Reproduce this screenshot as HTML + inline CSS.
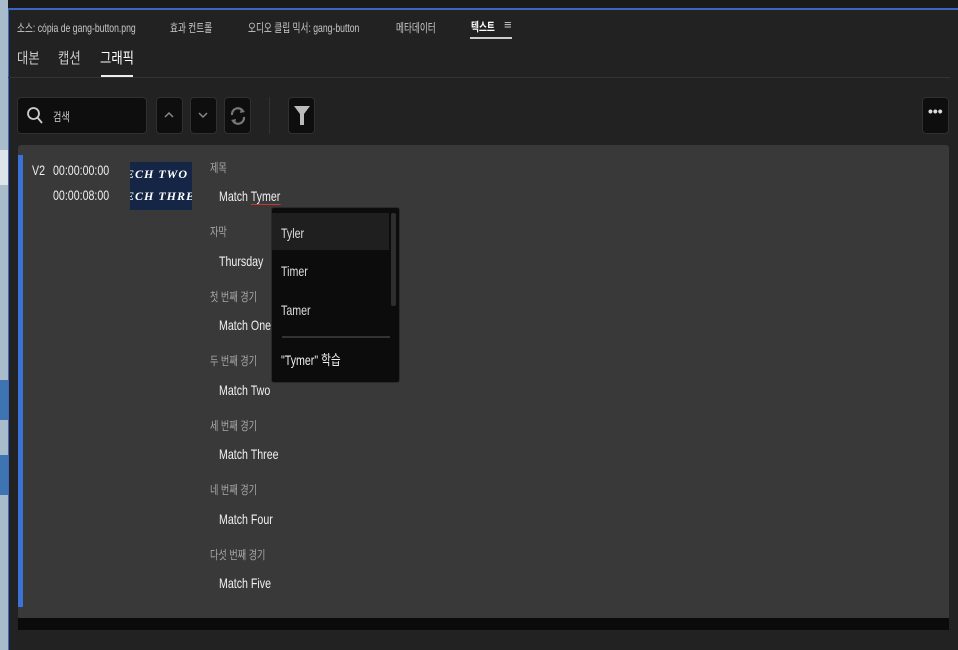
<!DOCTYPE html>
<html><head><meta charset="utf-8"><style>
*{margin:0;padding:0;box-sizing:border-box}
body{width:958px;height:650px;overflow:hidden;background:#1d1d1d;position:relative;font-family:"Liberation Sans","Noto Sans CJK KR",sans-serif;color:#ddd}
.a{position:absolute}
.t{position:absolute;white-space:nowrap;transform:scaleX(.76);transform-origin:left top}
.btn{position:absolute;background:#0e0e0e;border:1px solid #303030;border-radius:4px}
.lbl{font-size:12px;color:#a8a8a8}
.val{font-size:14px;color:#f0f0f0}
.tab{font-size:12px;color:#c8c8c8;transform:scaleX(.72)}
</style></head><body>
<div class="a" style="left:0;top:0;width:958px;height:8px;background:#1b1b1b"></div>
<div class="a" style="left:0;top:8px;width:958px;height:2px;background:#3a66c4"></div>
<div class="a" style="left:0;top:0;width:8px;height:650px;background:#a9bccb"></div>
<div class="a" style="left:0;top:150px;width:8px;height:35px;background:#dde4ea"></div>
<div class="a" style="left:0;top:380px;width:8px;height:40px;background:#3f74b3"></div>
<div class="a" style="left:0;top:455px;width:8px;height:40px;background:#3f74b3"></div>
<div class="a" style="left:8px;top:10px;width:950px;height:640px;background:#222"></div>
<div class="a" style="left:8px;top:10px;width:1px;height:640px;background:#3a66c4"></div>
<div class="t tab" style="left:17px;top:19px">소스: cópia de gang-button.png</div>
<div class="t tab" style="left:170px;top:19px">효과 컨트롤</div>
<div class="t tab" style="left:248px;top:19px">오디오 클립 믹서: gang-button</div>
<div class="t tab" style="left:396px;top:19px">메타데이터</div>
<div class="t tab" style="left:471px;top:18px;color:#fff;font-weight:bold">텍스트</div>
<div class="a" style="left:504px;top:17px;font-size:13px;color:#ccc">≡</div>
<div class="a" style="left:470px;top:37px;width:42px;height:2px;background:#ccc"></div>
<div class="t" style="left:17px;top:47px;font-size:15px;color:#ccc;transform:scaleX(.82)">대본</div>
<div class="t" style="left:58px;top:47px;font-size:15px;color:#ccc;transform:scaleX(.82)">캡션</div>
<div class="t" style="left:100px;top:47px;font-size:15px;color:#fff;transform:scaleX(.82)">그래픽</div>
<div class="a" style="left:101px;top:75px;width:32px;height:2px;background:#eee"></div>
<div class="a" style="left:8px;top:77px;width:942px;height:1px;background:#333"></div>
<div class="btn" style="left:17px;top:97px;width:130px;height:37px"></div>
<svg class="a" style="left:26px;top:106px" width="18" height="20"><circle cx="7.5" cy="7.5" r="5.5" fill="none" stroke="#ccc" stroke-width="1.8"/><line x1="11.5" y1="11.5" x2="16" y2="17" stroke="#ccc" stroke-width="1.8"/></svg>
<div class="t" style="left:53px;top:108px;font-size:12px;color:#ccc">검색</div>
<div class="btn" style="left:156px;top:97px;width:27px;height:37px"></div>
<svg class="a" style="left:163px;top:111px" width="12" height="8"><path d="M2 6L6 2L10 6" fill="none" stroke="#888" stroke-width="1.5"/></svg>
<div class="btn" style="left:190px;top:97px;width:27px;height:37px"></div>
<svg class="a" style="left:197px;top:111px" width="12" height="8"><path d="M2 2L6 6L10 2" fill="none" stroke="#888" stroke-width="1.5"/></svg>
<div class="btn" style="left:224px;top:97px;width:27px;height:37px"></div>
<svg class="a" style="left:228px;top:104px" width="20" height="24"><path d="M4 11A6 6 0 0 1 15 7M16 13A6 6 0 0 1 5 17" fill="none" stroke="#777" stroke-width="2.2"/><path d="M13 4L17 8L12 9Z M7 20L3 16L8 15Z" fill="#777"/></svg>
<div class="a" style="left:269px;top:97px;width:1px;height:37px;background:#333"></div>
<div class="btn" style="left:288px;top:97px;width:27px;height:37px"></div>
<svg class="a" style="left:292px;top:104px" width="20" height="24"><path d="M2 2H18L12 10V21H8V10Z" fill="#bbb"/></svg>
<div class="btn" style="left:922px;top:97px;width:27px;height:37px"></div>
<div class="a" style="left:928px;top:103px;font-size:14px;color:#ddd;font-weight:bold">•••</div>
<div class="a" style="left:18px;top:145px;width:931px;height:475px;background:#393939;border-radius:3px"></div>
<div class="a" style="left:18px;top:618px;width:931px;height:12px;background:#0b0b0b"></div>
<div class="a" style="left:18px;top:155px;width:5px;height:452px;background:#3a72d8"></div>
<div class="t" style="left:32px;top:162px;font-size:14px;color:#eee">V2</div>
<div class="t" style="left:53px;top:162px;font-size:14px;color:#eee">00:00:00:00</div>
<div class="t" style="left:53px;top:187px;font-size:14px;color:#eee">00:00:08:00</div>
<div class="a" style="left:130px;top:162px;width:62px;height:48px;background:#142545;overflow:hidden">
<div style="position:absolute;left:-4px;top:5px;font:italic bold 12px 'Liberation Serif',serif;color:#fff;letter-spacing:1px;white-space:nowrap">ECH TWO</div>
<div style="position:absolute;left:-4px;top:27px;font:italic bold 12px 'Liberation Serif',serif;color:#fff;letter-spacing:1px;white-space:nowrap">ECH THREE</div></div>
<div class="t lbl" style="left:210px;top:159px">제목</div>
<div class="t val" style="left:219px;top:188px">Match <span style="border-bottom:1px solid #c33">Tymer</span></div>
<div class="t lbl" style="left:210px;top:223px">자막</div>
<div class="t val" style="left:219px;top:253px">Thursday</div>
<div class="t lbl" style="left:210px;top:288px">첫 번째 경기</div>
<div class="t val" style="left:219px;top:317px">Match One</div>
<div class="t lbl" style="left:210px;top:352px">두 번째 경기</div>
<div class="t val" style="left:219px;top:382px">Match Two</div>
<div class="t lbl" style="left:210px;top:417px">세 번째 경기</div>
<div class="t val" style="left:219px;top:446px">Match Three</div>
<div class="t lbl" style="left:210px;top:481px">네 번째 경기</div>
<div class="t val" style="left:219px;top:511px">Match Four</div>
<div class="t lbl" style="left:210px;top:546px">다섯 번째 경기</div>
<div class="t val" style="left:219px;top:575px">Match Five</div>
<div class="a" style="left:271px;top:207px;width:129px;height:176px;background:#0c0c0c;border:1px solid #2a2a2a;border-radius:3px"></div>
<div class="a" style="left:272px;top:213px;width:117px;height:37px;background:#1f1f1f"></div>
<div class="a" style="left:391px;top:213px;width:5px;height:93px;background:#2e2e2e;border-radius:2px"></div>
<div class="t val" style="left:281px;top:225px;color:#ddd">Tyler</div>
<div class="t val" style="left:281px;top:263px;color:#ddd">Timer</div>
<div class="t val" style="left:281px;top:302px;color:#ddd">Tamer</div>
<div class="a" style="left:282px;top:336px;width:108px;height:2px;background:#333"></div>
<div class="t val" style="left:281px;top:350px;color:#eee">"Tymer" 학습</div>
</body></html>
